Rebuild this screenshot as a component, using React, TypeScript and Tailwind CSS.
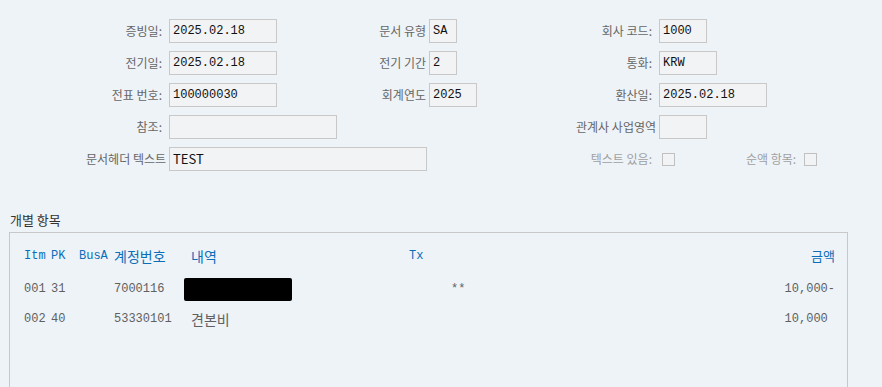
import React from 'react';

const KR = "font-['Noto_Sans_CJK_KR','Noto_Sans',sans-serif]";
const MONO = "font-['Liberation_Mono','Noto_Sans_CJK_KR',monospace]";

type Field = { label?: string; value?: string; w?: string; pad?: string };

const Label: React.FC<{ text?: string; pad?: string; muted?: boolean }> = ({ text, pad = 'pr-[7px]', muted }) => (
  <div className={`h-6 flex items-center justify-end whitespace-nowrap text-[12px] ${pad} ${muted ? 'text-[#a0a0a0]' : 'text-[#666]'} ${KR}`}>
    {text}
  </div>
);

const Input: React.FC<{ value?: string; w: string; sans?: boolean }> = ({ value, w, sans }) => (
  <div
    className={`h-6 ${w} shrink-0 bg-[#f2f3f4] border border-[#c8c8c8] flex items-center pl-[3px] text-[#111] whitespace-nowrap ${
      sans ? `text-[13px] ${KR}` : `text-[12px] ${MONO}`
    }`}
  >
    {value}
  </div>
);

const Check = () => <div className="w-[13px] h-[13px] bg-[#f2f3f4] border border-[#c0c0c0]" />;

const rows: { c1: Field; c2: Field; c3: Field }[] = [
  {
    c1: { label: '증빙일:', value: '2025.02.18', w: 'w-[108px]' },
    c2: { label: '문서 유형', value: 'SA', w: 'w-[28px]' },
    c3: { label: '회사 코드:', value: '1000', w: 'w-[48px]' },
  },
  {
    c1: { label: '전기일:', value: '2025.02.18', w: 'w-[108px]' },
    c2: { label: '전기 기간', value: '2', w: 'w-[28px]' },
    c3: { label: '통화:', value: 'KRW', w: 'w-[58px]' },
  },
  {
    c1: { label: '전표 번호:', value: '100000030', w: 'w-[108px]' },
    c2: { label: '회계연도', value: '2025', w: 'w-[48px]' },
    c3: { label: '환산일:', value: '2025.02.18', w: 'w-[108px]' },
  },
  {
    c1: { label: '참조:', value: '', w: 'w-[168px]' },
    c2: {},
    c3: { label: '관계사 사업영역', value: '', w: 'w-[48px]', pad: 'pr-[3px]' },
  },
];

const items = [
  { itm: '001', pk: '31', acct: '7000116', text: null, tx: '**', amt: '10,000-' },
  { itm: '002', pk: '40', acct: '53330101', text: '견본비', tx: '', amt: '10,000 ' },
];

const rowGrid = 'grid grid-cols-[27px_28px_35px_77px_218px_1fr_auto] items-center pl-[14px] pr-[12px] h-6';

export default function App() {
  return (
    <div className="w-full h-[387px] overflow-hidden bg-[#eef3f8]">
      {/* header form */}
      <div className="pt-[19px] grid grid-cols-[169px_108px_152px_48px_182px_1fr] gap-y-2">
        {rows.map((r, i) => (
          <React.Fragment key={i}>
            <Label text={r.c1.label} />
            <div className="flex">
              <Input value={r.c1.value} w={r.c1.w!} />
            </div>
            <Label text={r.c2.label} pad="pr-[3px]" />
            <div className="flex">{r.c2.w && <Input value={r.c2.value} w={r.c2.w} />}</div>
            <Label text={r.c3.label} pad={r.c3.pad} />
            <div className="flex">
              <Input value={r.c3.value} w={r.c3.w!} />
            </div>
          </React.Fragment>
        ))}
        <Label text="문서헤더 텍스트" pad="pr-[3px]" />
        <div className="flex">
          <Input value="TEST" w="w-[258px]" sans />
        </div>
        <div />
        <div />
        <Label text="텍스트 있음:" muted />
        <div className="h-6 flex items-center">
          <div className="ml-[3px]">
            <Check />
          </div>
          <span className={`ml-[71px] text-[12px] text-[#a0a0a0] whitespace-nowrap ${KR}`}>순액 항목:</span>
          <div className="ml-[8px]">
            <Check />
          </div>
        </div>
      </div>

      {/* line items */}
      <div className={`mt-[41px] ml-[10px] h-4 leading-4 text-[13px] text-[#333] ${KR}`}>개별 항목</div>
      <div className="mt-[4px] ml-[9px] w-[839px] h-[200px] border border-[#c8c8c8] pt-[11px]">
        <div className={`${rowGrid} text-[12px] text-[#0a6eb8]`}>
          <span className={MONO}>Itm</span>
          <span className={MONO}>PK</span>
          <span className={MONO}>BusA</span>
          <span className={`text-[14px] ${KR}`}>계정번호</span>
          <span className={`text-[14px] ${KR}`}>내역</span>
          <span className={MONO}>Tx</span>
          <span className={`text-[13px] text-right ${KR}`}>금액</span>
        </div>
        {items.map((it, i) => (
          <div key={it.itm} className={`${rowGrid} ${i === 0 ? 'mt-[8px]' : 'mt-[7px]'} text-[12px] text-[#606060] ${MONO}`}>
            <span>{it.itm}</span>
            <span>{it.pk}</span>
            <span />
            <span>{it.acct}</span>
            {it.text ? (
              <span className={`text-[14px] ${KR}`}>{it.text}</span>
            ) : (
              <div className="-ml-[7px] mt-[2px] w-[108px] h-[23px] bg-black rounded-[2px]" />
            )}
            <span className="pl-[42px]">{it.tx}</span>
            <span className="text-right whitespace-pre">{it.amt}</span>
          </div>
        ))}
      </div>
    </div>
  );
}
